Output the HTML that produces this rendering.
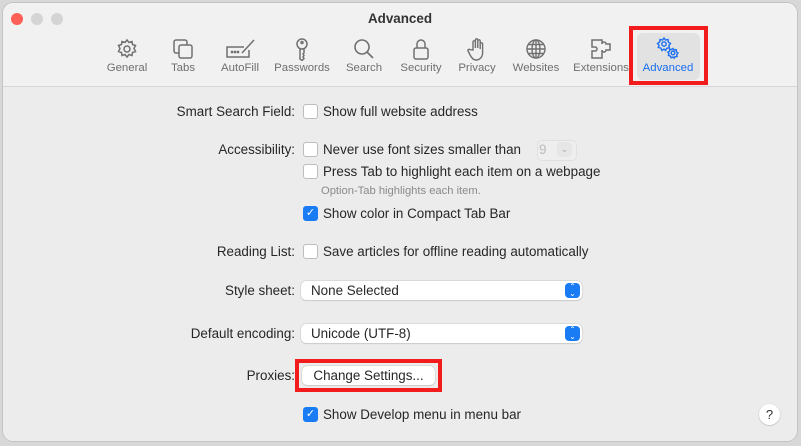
<!DOCTYPE html><html><head><style>
body{margin:0;width:801px;height:446px;background:#d8d8d8;font-family:"Liberation Sans",sans-serif;position:relative;overflow:hidden}
.win{position:absolute;left:3px;top:3px;width:794px;height:438px;border-radius:10px;background:#ececec;overflow:hidden;box-shadow:0 0 0 1px #c4c4c4}
.tb{position:absolute;left:0;top:0;width:794px;height:83px;background:#f1f1f1;border-bottom:1px solid #d6d6d6}
.a{position:absolute;font-size:13.4px;color:#262626;white-space:nowrap}
.r{text-align:right}
.tl{position:absolute;top:10px;width:12px;height:12px;border-radius:50%}
.it{position:absolute;top:59px;font-size:11.4px;color:#6f6f6f;transform:translateX(-50%)}
.ic{position:absolute;top:34px;width:24px;height:24px;transform:translateX(-50%)}
.cb{position:absolute;width:13px;height:13px;border:1px solid #bdbdbd;border-radius:3px;background:#fff}
.pop{position:absolute;left:298px;width:281px;height:19px;background:#fff;border-radius:5px;box-shadow:0 0 0 0.5px #c8c8c8,0 1px 1px #ccc}
.pop span{position:absolute;left:10px;top:2px;font-size:13.4px;color:#262626}
.pop i{position:absolute;right:2px;top:2px;width:15px;height:15px;border-radius:4px;background:#1a7cf5;color:#fff;font-style:normal;font-size:8px;line-height:7px;text-align:center}
.red{position:absolute;border:4px solid #f21c1c}
</style></head><body>
<div class="win">
<div class="tb">
<div class="tl" style="left:8px;background:#fe5f57"></div>
<div class="tl" style="left:28px;background:#d4d4d4"></div>
<div class="tl" style="left:48px;background:#d4d4d4"></div>
<div class="a" style="left:0;width:794px;text-align:center;top:8px;font-weight:bold;color:#333">Advanced</div>
<div style="position:absolute;left:634px;top:30px;width:63px;height:47px;background:#e2e2e2;border-radius:6px"></div>
<svg class="ic" style="left:124px" viewBox="0 0 24 24" fill="none" stroke="#707070" stroke-width="1.5"><circle cx="12" cy="12" r="3"/><path d="M12 3l2 2.5 3-1 .5 3 3 1-1.5 3 1.5 3-3 1-.5 3-3-1-2 2.5-2-2.5-3 1-.5-3-3-1 1.5-3-1.5-3 3-1 .5-3 3 1z"/></svg>
<svg class="ic" style="left:180px" viewBox="0 0 24 24" fill="none" stroke="#707070" stroke-width="1.5"><rect x="3" y="3" width="13" height="13" rx="2"/><rect x="8" y="8" width="13" height="13" rx="2" fill="#f1f1f1"/></svg>
<svg class="ic" style="left:237px;width:32px" viewBox="0 0 32 24" fill="none" stroke="#707070" stroke-width="1.5"><path d="M20 10H3v10h22v-7"/><path d="M18 16l12-13"/><circle cx="8" cy="15" r=".6"/><circle cx="11" cy="15" r=".6"/><circle cx="14" cy="15" r=".6"/></svg>
<svg class="ic" style="left:299px" viewBox="0 0 24 24" fill="none" stroke="#707070" stroke-width="1.5"><circle cx="12" cy="7" r="5"/><circle cx="12" cy="5.5" r="1"/><path d="M10 12v10l2 1.5 2-2-1-1.5 1-1.5-1-1.5 1-1V12"/></svg>
<svg class="ic" style="left:361px" viewBox="0 0 24 24" fill="none" stroke="#707070" stroke-width="1.6"><circle cx="10" cy="10" r="7"/><path d="M15 15l6 6"/></svg>
<svg class="ic" style="left:418px" viewBox="0 0 24 24" fill="none" stroke="#707070" stroke-width="1.5"><rect x="5" y="11" width="14" height="11" rx="2"/><path d="M8 11V7a4 4 0 018 0v4"/></svg>
<svg class="ic" style="left:474px" viewBox="0 0 24 24" fill="none" stroke="#707070" stroke-width="1.4"><path d="M8 13V5a1.2 1.2 0 012.4 0v6V3a1.2 1.2 0 012.4 0v8V4a1.2 1.2 0 012.4 0v8V7a1.2 1.2 0 012.4 0v9c0 4-3 7-6.5 7-3 0-4.5-2-6-5l-2-4a1.2 1.2 0 012-1.3z"/></svg>
<svg class="ic" style="left:533px" viewBox="0 0 24 24" fill="none" stroke="#707070" stroke-width="1.4"><circle cx="12" cy="12" r="9"/><ellipse cx="12" cy="12" rx="4" ry="9"/><path d="M3 12h18M4.5 7.5h15M4.5 16.5h15M12 3v18"/></svg>
<svg class="ic" style="left:598px" viewBox="0 0 24 24" fill="none" stroke="#707070" stroke-width="1.5"><path d="M3 3h10v4a2 2 0 014 0v0h4v6h-4a2 2 0 01-4 0H13v8H3v-7h3a2 2 0 000-4H3z"/></svg>
<svg class="ic" style="left:665px;top:33px" viewBox="0 0 24 24" fill="none" stroke="#1a6ef0" stroke-width="1.4"><circle cx="8" cy="8" r="2.2"/><path d="M8 2l1.5 2 2.5-.5.3 2.5 2.2 1.5-1.7 2 .6 2.4-2.5.3L9.5 14.5 8 13l-2 1.5L4.8 12l-2.5-.5.8-2.3L1.5 7.5 3.7 6 4 3.5l2.5.5z"/><circle cx="17" cy="17" r="1.8"/><path d="M17 12.5l1.2 1.5 2-.3.2 2 1.6 1.3-1.3 1.5.4 2-2 .2-1 1.5-1.2-1.2-1.8.8-.8-1.8-1.9-.5.6-1.8-1.2-1.5 1.8-1 .2-2 1.8.4z"/></svg>
<div class="it" style="left:124px">General</div>
<div class="it" style="left:180px">Tabs</div>
<div class="it" style="left:237px">AutoFill</div>
<div class="it" style="left:299px">Passwords</div>
<div class="it" style="left:361px">Search</div>
<div class="it" style="left:418px">Security</div>
<div class="it" style="left:474px">Privacy</div>
<div class="it" style="left:533px">Websites</div>
<div class="it" style="left:598px">Extensions</div>
<div class="it" style="left:665px;color:#1a6ef0">Advanced</div>
</div>
<div class="a r" style="right:502px;top:101px">Smart Search Field:</div>
<div class="cb" style="left:300px;top:101px"></div><div class="a" style="left:320px;top:101px">Show full website address</div>
<div class="a r" style="right:502px;top:139px">Accessibility:</div>
<div class="cb" style="left:300px;top:139px"></div><div class="a" style="left:320px;top:139px">Never use font sizes smaller than</div>
<div style="position:absolute;left:534px;top:137px;width:38px;height:19px;border:1px solid #e0e0e0;border-radius:5px;background:#eee"></div>
<div class="a" style="left:536px;top:139px;color:#bbb">9</div>
<div style="position:absolute;left:554px;top:139px;width:15px;height:15px;border-radius:4px;background:#e6e6e6;color:#aaa;font-size:9px;text-align:center;line-height:15px">⌄</div>
<div class="cb" style="left:300px;top:161px"></div><div class="a" style="left:320px;top:161px">Press Tab to highlight each item on a webpage</div>
<div class="a" style="left:318px;top:182px;font-size:11.2px;color:#8a8a8a">Option-Tab highlights each item.</div>
<div class="cb" style="left:300px;top:203px;background:#1a7cf5;border-color:#1a7cf5;color:#fff;font-size:11px;line-height:13px;text-align:center">✓</div><div class="a" style="left:320px;top:203px">Show color in Compact Tab Bar</div>
<div class="a r" style="right:502px;top:241px">Reading List:</div>
<div class="cb" style="left:300px;top:241px"></div><div class="a" style="left:320px;top:241px">Save articles for offline reading automatically</div>
<div class="a r" style="right:502px;top:280px">Style sheet:</div>
<div class="pop" style="top:278px"><span>None Selected</span><i>⌃<br>⌄</i></div>
<div class="a r" style="right:502px;top:323px">Default encoding:</div>
<div class="pop" style="top:321px"><span>Unicode (UTF-8)</span><i>⌃<br>⌄</i></div>
<div class="a r" style="right:502px;top:365px">Proxies:</div>
<div style="position:absolute;left:299px;top:363px;width:133px;height:19px;background:#fff;border-radius:5px;box-shadow:0 0 0 .5px #c8c8c8,0 1px 1px #ccc;font-size:13.4px;color:#262626;text-align:center;line-height:19px">Change Settings...</div>
<div class="red" style="left:292px;top:356px;width:139px;height:25px"></div>
<div class="cb" style="left:300px;top:404px;background:#1a7cf5;border-color:#1a7cf5;color:#fff;font-size:11px;line-height:13px;text-align:center">✓</div><div class="a" style="left:320px;top:404px">Show Develop menu in menu bar</div>
<div style="position:absolute;left:756px;top:401px;width:21px;height:21px;border-radius:50%;background:#fff;box-shadow:0 0.5px 1.5px #aaa;text-align:center;line-height:21px;font-size:13px;color:#333">?</div>
<div class="red" style="left:626px;top:23px;width:71px;height:51px"></div>
</div>
</body></html>
